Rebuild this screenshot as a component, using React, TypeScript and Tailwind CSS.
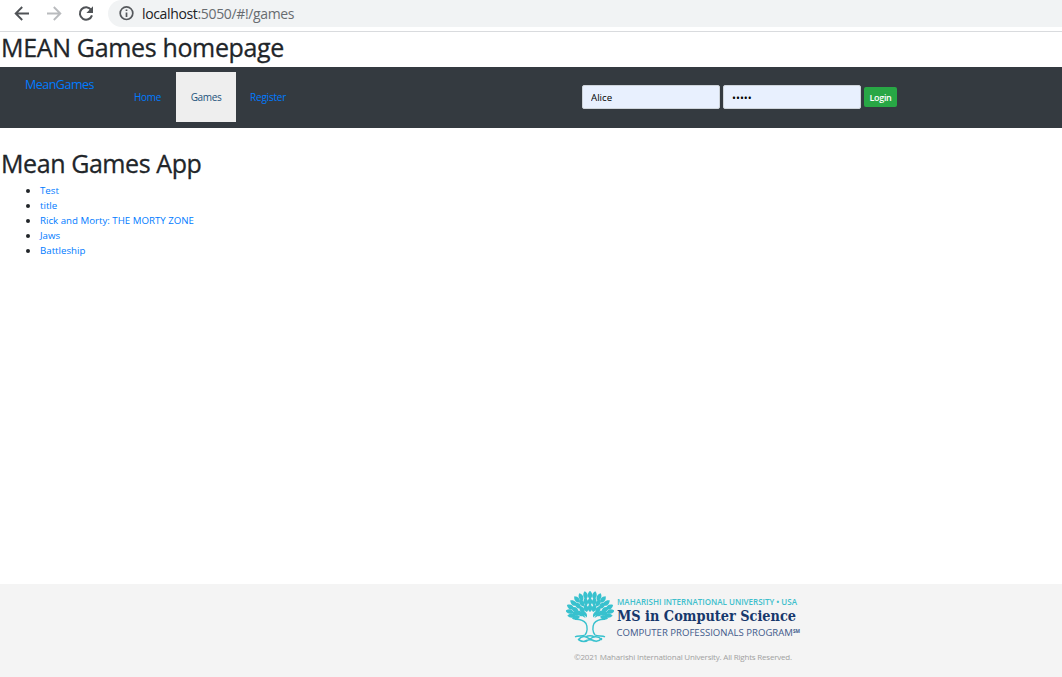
import React from "react";

const games = ["Test", "title", "Rick and Morty: THE MORTY ZONE", "Jaws", "Battleship"];

function BrowserBar() {
  return (
    <header className="flex h-8 shrink-0 items-start border-b border-[#d9dbde] bg-white">
      <div className="flex h-[27px] w-[108px] shrink-0 items-center gap-4 pl-3.5">
        <svg width="16" height="16" viewBox="0 0 16 16" fill="none" stroke="#505357" strokeWidth="1.9">
          <path d="M15 7.5H2M8.2 1 1.7 7.5l6.5 6.5" />
        </svg>
        <svg width="16" height="16" viewBox="0 0 16 16" fill="none" stroke="#b9bbbe" strokeWidth="1.9">
          <path d="M1 7.5h13M7.8 1 14.3 7.5l-6.5 6.5" />
        </svg>
        <svg width="16" height="16" viewBox="0 0 16 16" fill="none" stroke="#505357" strokeWidth="2">
          <path d="M13.2 3.9A6.2 6.2 0 1 0 14 9.4" />
          <path d="M15 .3v6.6H8.4z" fill="#505357" stroke="none" />
        </svg>
      </div>
      <div className="flex h-[27px] flex-1 items-center rounded-l-full bg-[#f1f3f4] pl-[11px]">
        <svg width="15" height="15" viewBox="0 0 15 15" fill="none" stroke="#55585c" strokeWidth="1.7">
          <circle cx="7.5" cy="7.2" r="6.3" />
          <path d="M7.5 6.4v4.6M7.5 3.4v1.7" />
        </svg>
        <span className="ml-2 text-[14px] leading-none tracking-[-0.35px] whitespace-nowrap text-[#686c70]">
          <span className="text-[#202124]">localhost</span>:5050/#!/games
        </span>
      </div>
    </header>
  );
}

const leaves: [number, number, number][] = [
  [24, 4, 0], [19.5, 4.3, -12], [28.5, 4.3, 12], [15, 6, -25], [33, 6, 25],
  [11, 8.5, -40], [37, 8.5, 40], [7.5, 12, -50], [40.5, 12, 50], [4.5, 16, -60],
  [43.5, 16, 60], [3.6, 20.5, -80], [44.4, 20.5, 80], [5.5, 24.5, -95], [42.5, 24.5, 95],
  [10, 26.5, -105], [38, 26.5, 105],
  [24, 10.5, 0], [19.8, 10.5, -12], [28.2, 10.5, 12], [15.8, 12, -30], [32.2, 12, 30],
  [12, 14.5, -42], [36, 14.5, 42], [9, 18.5, -60], [39, 18.5, 60], [10, 22.5, -75],
  [38, 22.5, 75], [24, 17, 0], [20, 17, -14], [28, 17, 14], [16, 18.5, -32],
  [32, 18.5, 32], [14.3, 22.5, -50], [33.7, 22.5, 50], [18.5, 23.5, -28], [29.5, 23.5, 28],
];

function Tree() {
  return (
    <svg width="48" height="52" viewBox="0 0 48 52" fill="none" className="shrink-0">
      {leaves.map(([x, y, a], i) => (
        <path
          key={i}
          transform={`translate(${x} ${y}) rotate(${a})`}
          d="M0-4.2C3.2-1.4 2.8 2.2 0 4C-2.8 2.2-3.2-1.4 0-4.2Z"
          fill="#38c1ce"
        />
      ))}
      <path
        d="M12 27.6C17 27.5 20 28.5 21.5 30.5L18 24 23 28.5 24 20 25 28.5 30 24 26.5 30.5C28 28.5 31 27.5 36 27.6C31 29.5 28.4 31 27.4 33.5C26.4 37 26.5 42 28.5 45H19.5C21.5 42 21.6 37 20.6 33.5C19.6 31 17 29.5 12 27.6Z"
        fill="#f4f4f4"
      />
      <path
        d="M9 28.2C14 28 18 29.6 20 32.5C21.8 36 21.5 41 19 44C16 45.6 12 44.3 9 45.8M39 28.2C34 28 30 29.6 28 32.5C26.2 36 26.5 41 29 44C32 45.6 36 44.3 39 45.8"
        stroke="#38c1ce"
        strokeWidth="1.4"
      />
      <g stroke="#38c1ce" strokeWidth="1.5" strokeLinecap="round">
        <path d="M12.5 48.5c4-4.5 7.5-3 11.5-.5s8 4 11.5-.5M13 49c4 2.5 8 1.5 11-1s8-3.5 11.5.5M18 50.4q6-3.4 12 0M19.5 46q4.5-2.4 9 0" />
      </g>
    </svg>
  );
}

function Logo() {
  return (
    <div className="flex h-[52px] w-[236px] items-start">
      <Tree />
      <svg width="188" height="52" viewBox="0 0 188 52" className="shrink-0 overflow-visible">
        <text x="3" y="13.6" fontSize="8.3" fontWeight="600" fill="#40bfcc" textLength="180" lengthAdjust="spacingAndGlyphs" className="font-['Open_Sans','Noto_Sans',sans-serif]">
          MAHARISHI INTERNATIONAL UNIVERSITY • USA
        </text>
        <text x="3" y="30.3" fontSize="14.6" fontWeight="700" fill="#17386c" textLength="179" lengthAdjust="spacingAndGlyphs" className="font-['DejaVu_Serif',serif]">
          MS in Computer Science
        </text>
        <text x="2.5" y="45" fontSize="9.7" fontWeight="500" fill="#40598a" textLength="183.5" lengthAdjust="spacingAndGlyphs" className="font-['Open_Sans','Noto_Sans',sans-serif]">
          COMPUTER PROFESSIONALS PROGRAM<tspan fontSize="4.8" fontWeight="700" dy="-3.4">SM</tspan>
        </text>
      </svg>
    </div>
  );
}

export default function App() {
  return (
    <div className="flex h-[677px] flex-col overflow-hidden bg-white font-['Open_Sans','Noto_Sans',sans-serif] text-[10px] leading-[15px] text-[#212529]">
      <BrowserBar />
      <h1 className="h-[35px] shrink-0 pl-px text-[25px] leading-[30px] font-medium tracking-[-0.34px] [-webkit-text-stroke:0.3px_#212529]">MEAN Games homepage</h1>
      <nav className="flex h-[61px] shrink-0 items-start bg-[#343a40] pt-[5px] text-[#007bff]">
        <a className="w-[119px] pt-[3px] pl-[25px] text-[12.5px] leading-[20px] tracking-[-0.5px]">MeanGames</a>
        <a className="flex h-[50px] w-[57px] items-center pt-px pl-[15px] tracking-[-0.3px]">Home</a>
        <a className="flex h-[50px] w-[60px] items-center justify-center bg-[#eeeeee] pt-px tracking-[-0.35px] text-[#23527c]">Games</a>
        <a className="flex h-[50px] w-[60px] items-center pt-px pl-[14px] tracking-[-0.2px]">Register</a>
        <form className="ml-[286px] flex h-[50px] items-center gap-[3px]" onSubmit={(e) => e.preventDefault()}>
          <input defaultValue="Alice" className="h-6 w-[138px] rounded-[2px] border border-[#ced4da] bg-[#e8f0fe] px-2 pt-px text-[9.7px] text-black" />
          <input type="password" defaultValue="alice" className="h-6 w-[138px] rounded-[2px] border border-[#ced4da] bg-[#e8f0fe] px-2 pt-[2px] text-[10.5px] text-black" />
          <button className="h-5 w-[33px] rounded-[2px] bg-[#28a745] pt-px text-[9px] font-semibold tracking-[-0.3px] text-white">Login</button>
        </form>
      </nav>
      <main className="flex-1 pt-[20px]">
        <h1 className="h-[35px] pl-px text-[25px] leading-[30px] font-medium tracking-[-0.42px] [-webkit-text-stroke:0.3px_#212529]">Mean Games App</h1>
        <ul className="list-disc pl-10">
          {games.map((name) => (
            <li key={name}>
              <a className="text-[9.7px] text-[#007bff]">{name}</a>
            </li>
          ))}
        </ul>
      </main>
      <footer className="flex h-[93px] shrink-0 flex-col bg-[#f4f4f4] pt-[7px] pl-[566px]">
        <Logo />
        <p className="mt-2 pl-2 text-[8px] leading-3 tracking-[-0.2px] whitespace-nowrap text-[#a1a1a1]">©2021 Maharishi International University. All Rights Reserved.</p>
      </footer>
    </div>
  );
}
